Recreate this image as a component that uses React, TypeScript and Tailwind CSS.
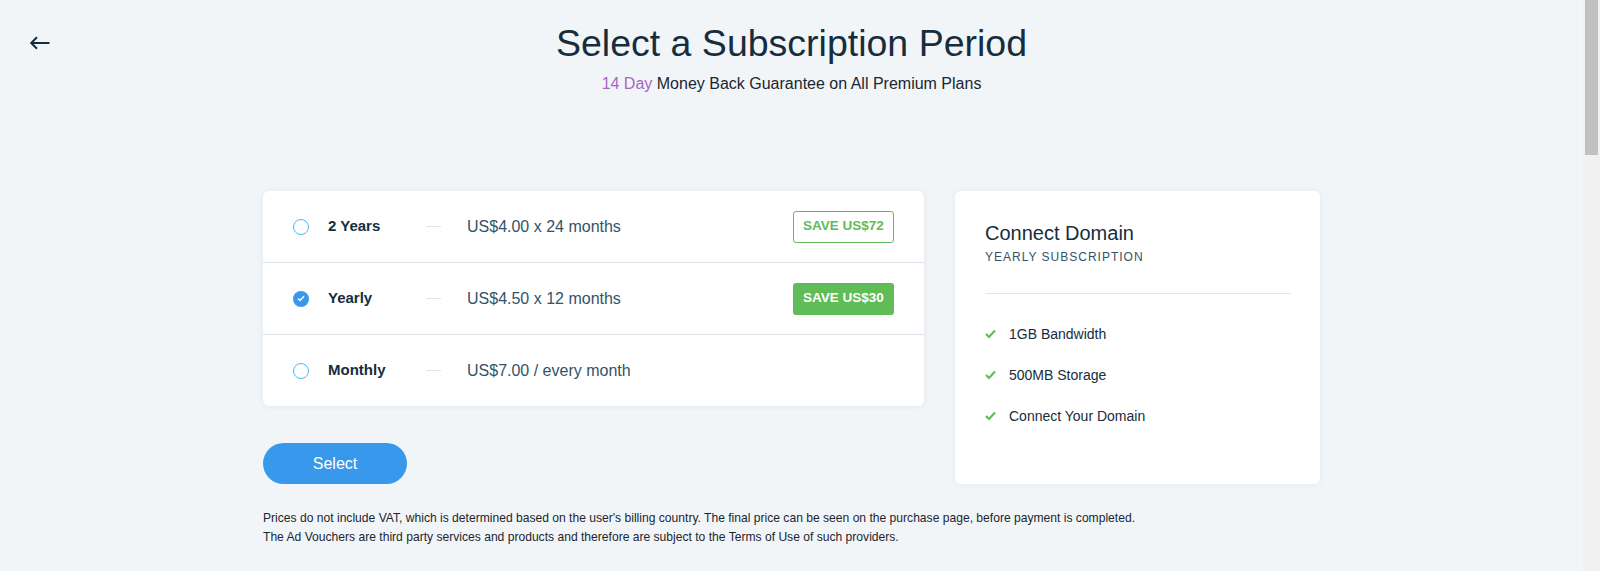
import React from "react";

const font = { fontFamily: '"Liberation Sans", Arial, sans-serif' };

type Period = {
  label: string;
  price: string;
  save?: string;
  selected?: boolean;
};

const periods: Period[] = [
  { label: "2 Years", price: "US$4.00 x 24 months", save: "SAVE US$72" },
  { label: "Yearly", price: "US$4.50 x 12 months", save: "SAVE US$30", selected: true },
  { label: "Monthly", price: "US$7.00 / every month" },
];

const features = ["1GB Bandwidth", "500MB Storage", "Connect Your Domain"];

export default function App() {
  return (
    <div className="flex h-[571px] w-full overflow-hidden bg-[#f2f5f8] text-[#162d3d]" style={font}>
      <main className="relative flex-1">
        {/* Back */}
        <button className="absolute left-[29px] top-[33px] text-[#162d3d]">
          <svg width="21" height="20" viewBox="0 0 21 20" fill="none" stroke="currentColor" strokeWidth="2">
            <path d="M20.5 10H2.5" />
            <path d="M8 4.2L2.2 10L8 15.8" />
          </svg>
        </button>

        <header className="flex flex-col items-center pt-[21px]">
          <h1 className="text-[37.5px] leading-[44px] text-[#162d3d]">Select a Subscription Period</h1>
          <p className="mt-[9px] text-[16px] leading-[20px] text-[#1a2630]">
            <span className="text-[#a866c4]">14 Day</span> Money Back Guarantee on All Premium Plans
          </p>
        </header>

        <div className="mx-auto mt-[97px] w-[1057px]">
          <div className="flex items-start gap-[31px]">
            <div className="flex w-[661px] flex-col">
              <div className="overflow-hidden rounded-[6px] bg-white shadow-[0_0_6px_rgba(22,45,61,0.07)]">
                {periods.map((p, i) => (
                  <div
                    key={p.label}
                    className={`flex h-[71px] items-center pl-[30px] pr-[30px] ${i > 0 ? "box-content border-t border-[#dfe5eb]" : ""}`}
                  >
                    {p.selected ? (
                      <span className="flex h-[16px] w-[16px] items-center justify-center rounded-full bg-[#3899ec]">
                        <svg width="8" height="7" viewBox="0 0 8 7" fill="none" stroke="white" strokeWidth="1.4">
                          <path d="M1 3.6L3 5.5L7 1.3" />
                        </svg>
                      </span>
                    ) : (
                      <span className="h-[16px] w-[16px] rounded-full border border-[#4eb7f5] bg-white" />
                    )}
                    <span className="ml-[19px] w-[98px] text-[15px] font-bold text-[#162d3d]">{p.label}</span>
                    <span className="h-px w-[15px] bg-[#dfe5eb]" />
                    <span className="ml-[26px] flex-1 text-[16px] text-[#32536a]">{p.price}</span>
                    {p.save &&
                      (p.selected ? (
                        <span className="flex h-[32px] w-[101px] items-center justify-center rounded-[3px] bg-[#60bc57] text-[13.5px] font-bold text-white">
                          {p.save}
                        </span>
                      ) : (
                        <span className="flex h-[32px] w-[101px] items-center justify-center rounded-[3px] border border-[#60bc57] text-[13.5px] font-bold text-[#60bc57]">
                          {p.save}
                        </span>
                      ))}
                  </div>
                ))}
              </div>

              <button className="mt-[37px] h-[41px] w-[144px] rounded-full bg-[#3899ec] text-[16px] text-white">
                Select
              </button>
            </div>

            <aside className="h-[293px] w-[365px] rounded-[6px] bg-white pl-[30px] pr-[29px] pt-[30px] shadow-[0_0_6px_rgba(22,45,61,0.07)]">
              <h2 className="text-[20px] leading-[24px] text-[#162d3d]">Connect Domain</h2>
              <p className="mt-[4px] text-[12px] leading-[16px] tracking-[1px] text-[#32536a]">YEARLY SUBSCRIPTION</p>
              <div className="mt-[28px] h-px bg-[#dfe5eb]" />
              <ul className="mt-[31px] flex flex-col gap-[23px]">
                {features.map((f) => (
                  <li key={f} className="flex items-center text-[14px] leading-[18px] text-[#162d3d]">
                    <svg width="11" height="10" viewBox="0 0 11 10" fill="none" stroke="#60bc57" strokeWidth="2.2">
                      <path d="M1 5L4 8L10 1.5" />
                    </svg>
                    <span className="ml-[13px]">{f}</span>
                  </li>
                ))}
              </ul>
            </aside>
          </div>

          <div className="mt-[25px] text-[12.1px] leading-[19px] text-[#1a2630]">
            <p>
              Prices do not include VAT, which is determined based on the user's billing country. The final price can be seen on the purchase page, before payment is completed.
            </p>
            <p>The Ad Vouchers are third party services and products and therefore are subject to the Terms of Use of such providers.</p>
          </div>
        </div>
      </main>

      {/* Scrollbar */}
      <div className="w-[17px] shrink-0 bg-[#f1f1f1] px-[2px]">
        <div className="h-[155px] bg-[#c1c1c1]" />
      </div>
    </div>
  );
}
